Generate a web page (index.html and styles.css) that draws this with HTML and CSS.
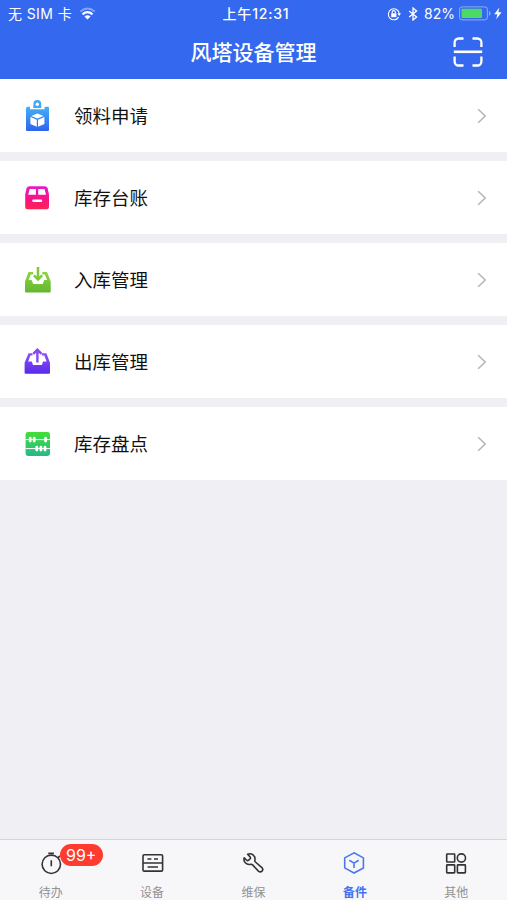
FILE: index.html
```
<!DOCTYPE html>
<html lang="zh-CN">
<head>
  <meta charset="UTF-8">
  <title>风塔设备管理</title>
  <meta name="viewport" content="width=device-width, initial-scale=1.0">
  <link rel="stylesheet" href="styles.css">
</head>
<body>

  <header class="header">
    <div class="status">
      <div class="status-left">
        <span class="carrier">无 SIM 卡</span>
        <svg width="17" height="13" viewBox="0 0 17 13" fill="none" stroke="#fff">
          <path d="M1.2 4.6Q8.5 -1.6 15.8 4.6" stroke-width="1.8" opacity=".4"/>
          <path d="M3.5 7.3Q8.5 3.1 13.5 7.3" stroke-width="2.2"/>
          <path d="M5.5 9.5Q8.5 7.1 11.5 9.5L8.5 12.4Z" fill="#fff" stroke="none"/>
        </svg>
      </div>
      <div class="time">上午12:31</div>
      <div class="status-right">
        <svg class="lock" width="14" height="14" viewBox="0 0 14 14" fill="none" stroke="#fff" stroke-width="1.1">
          <path d="M11.6 10.1A5.5 5.5 0 1 1 12.3 6.5"/>
          <path d="M10.3 6.3H14L12.2 8.9Z" fill="#fff" stroke="none"/>
          <rect x="4.2" y="6.3" width="5.2" height="3.9" fill="#fff" stroke="none"/>
          <path d="M5.2 6.5V5.2a1.6 1.6 0 0 1 3.2 0V6.5"/>
        </svg>
        <svg class="bluetooth" width="10" height="14" viewBox="0 0 10 14" fill="none" stroke="#fff" stroke-width="1.3">
          <path d="M1.2 4L8.6 10 5 13V1L8.6 4 1.2 10"/>
        </svg>
        <span class="percent">82%</span>
        <svg class="battery" width="32" height="15" viewBox="0 0 32 15">
          <rect x=".6" y=".9" width="27.8" height="13" rx="2.5" fill="none" stroke="#fff" opacity=".45"/>
          <rect x="2.5" y="2.8" width="20.5" height="9.2" rx=".8" fill="#4cd964"/>
          <path d="M30 5v4.8Q31.6 9 31.6 7.4T30 5" fill="#fff" opacity=".45"/>
        </svg>
        <svg width="8" height="13" viewBox="0 0 8 13" fill="#fff">
          <path d="M5.4 .6L.2 7.3H3.4L2.2 12.3 7.6 5.3H4.3Z"/>
        </svg>
      </div>
    </div>
    <div class="navbar">
      <h1>风塔设备管理</h1>
      <svg class="scan" width="30" height="30" viewBox="0 0 30 30" fill="none" stroke="#fff" stroke-width="2.3">
        <path d="M1.6 10V5.5A4 4 0 0 1 5.6 1.5H10.5M19.5 1.5H24.4A4 4 0 0 1 28.4 5.5V10M1.6 19.5V24.5A4 4 0 0 0 5.6 28.5H10.5M19.5 28.5H24.4A4 4 0 0 0 28.4 24.5V19.5"/>
        <path d="M.8 14.8H29.2" stroke-width="2.6"/>
      </svg>
    </div>
  </header>

  <main class="menu">
    <div class="row">
      <svg class="icon" viewBox="0 0 30 36">
        <defs><linearGradient id="blue" x2="0" y2="1"><stop stop-color="#43b1f5"/><stop offset="1" stop-color="#2e62f0"/></linearGradient></defs>
        <path d="M4.6 8.7H25a1 1 0 0 1 1 1V32a1 1 0 0 1-1 1H4a1 1 0 0 1-1-1V9.7Z" fill="url(#blue)"/>
        <path d="M7 8V11.2H21.6V8H18.2V9.7H10.4V8Z" fill="#fff"/>
        <path d="M10.4 10V5.9a3.9 3.9 0 0 1 7.8 0V10Z" fill="#40a8f4"/>
        <circle cx="14.3" cy="6.2" r="1.7" fill="#fff"/>
        <g fill="#fff">
          <path d="M14.4 15.6L20.5 18 14.4 20.6 8.2 18Z"/>
          <path d="M7.4 19.1L13.8 21.8V28.8L7.4 26ZM21.4 19.1L15 21.8V28.8L21.4 26Z"/>
        </g>
      </svg>
      <span class="label">领料申请</span>
      <svg class="arrow" viewBox="0 0 10 16"><path d="M1.2 1.3L8.2 8 1.2 14.7"/></svg>
    </div>
    <div class="row">
      <svg class="icon" viewBox="0 0 30 36">
        <defs><linearGradient id="pink" x2="0" y2="1"><stop stop-color="#e51ad0"/><stop offset=".6" stop-color="#f91480"/><stop offset="1" stop-color="#fc2550"/></linearGradient></defs>
        <path d="M6.5 6.2H21.7Q24 6.2 24.6 8.2L26 14.5V27Q26 29.2 23.8 29.2H4.4Q2.2 29.2 2.2 27V14.5L3.6 8.2Q4.2 6.2 6.5 6.2Z" fill="url(#pink)"/>
        <path d="M6.7 9H12.9V14.7H5.2ZM15.2 9H21.5L23 14.7H15.2Z" fill="#fff"/>
        <path d="M10.4 20.7H18" stroke="#fff" stroke-width="2.4" stroke-linecap="round"/>
      </svg>
      <span class="label">库存台账</span>
      <svg class="arrow" viewBox="0 0 10 16"><path d="M1.2 1.3L8.2 8 1.2 14.7"/></svg>
    </div>
    <div class="row">
      <svg class="icon" viewBox="0 0 30 36">
        <defs><linearGradient id="green" x2="0" y2="1"><stop stop-color="#8fd344"/><stop offset="1" stop-color="#62b72e"/></linearGradient></defs>
        <path d="M5.5 10H10V12.4H7.8L5.6 18H8.6L10.2 22H19.8L21.2 18H24.2L21.8 12.4H19.3V10H24L27.7 19.5V29.4a1 1 0 0 1-1 1H3a1 1 0 0 1-1-1V19.5Z" fill="url(#green)"/>
        <path d="M15 5V17.2M10.9 13.3L15 17.5 19.1 13.3" fill="none" stroke="#7cc93b" stroke-width="2.5"/>
      </svg>
      <span class="label">入库管理</span>
      <svg class="arrow" viewBox="0 0 10 16"><path d="M1.2 1.3L8.2 8 1.2 14.7"/></svg>
    </div>
    <div class="row">
      <svg class="icon" viewBox="0 0 30 36">
        <defs><linearGradient id="purple" x2="0" y2="1"><stop stop-color="#9450f8"/><stop offset="1" stop-color="#562ae8"/></linearGradient></defs>
        <path d="M5.5 9.2H9.5V11.4H7.4L5.2 17.6H8.8L10 21H18.9L20 17.6H23.6L21.3 11.4H19V9.2H23.4L27 18.8V28.8a1 1 0 0 1-1 1H2.6a1 1 0 0 1-1-1V18.8Z" fill="url(#purple)"/>
        <path d="M14.4 18.5V6.5M10.3 9.9L14.4 5.7 18.5 9.9" fill="none" stroke="#8548f5" stroke-width="2.4"/>
      </svg>
      <span class="label">出库管理</span>
      <svg class="arrow" viewBox="0 0 10 16"><path d="M1.2 1.3L8.2 8 1.2 14.7"/></svg>
    </div>
    <div class="row">
      <svg class="icon" viewBox="0 0 30 36">
        <defs><linearGradient id="teal" x2="0" y2="1"><stop stop-color="#43df34"/><stop offset="1" stop-color="#27b88b"/></linearGradient></defs>
        <rect x="2.6" y="6" width="24.4" height="24" rx="2.4" fill="url(#teal)"/>
        <path d="M2.6 13.6H27M2.6 22.6H27" stroke="#fff" stroke-width="1"/>
        <path d="M7.2 12.2V15M11.2 12.2V15M22.6 12.2V15M13.8 21.2V24M17.9 21.2V24M22 21.2V24" stroke="#fff" stroke-width="2.8" stroke-linecap="round"/>
      </svg>
      <span class="label">库存盘点</span>
      <svg class="arrow" viewBox="0 0 10 16"><path d="M1.2 1.3L8.2 8 1.2 14.7"/></svg>
    </div>
  </main>

  <nav class="tabbar">
    <div class="tab">
      <div class="tab-icon">
        <svg viewBox="0 0 24 24">
          <circle cx="12.3" cy="13.3" r="9.2"/>
          <path d="M9.3 2.4H14.9M12.3 9.2V15.3M18.9 6.8L21 4.8"/>
        </svg>
        <span class="badge">99+</span>
      </div>
      <span>待办</span>
    </div>
    <div class="tab">
      <div class="tab-icon">
        <svg viewBox="0 0 24 24">
          <rect x="3" y="3.7" width="19.6" height="16.4" rx="1.2"/>
          <path d="M3 12H22.6M7.4 8H11.4M14 8H18M7.6 16H18"/>
        </svg>
      </div>
      <span>设备</span>
    </div>
    <div class="tab">
      <div class="tab-icon">
        <svg viewBox="0 0 24 24">
          <path d="M5.6 3.3C9.6 1.6 13.6 4.7 12.9 8.6Q12.6 10.2 13.4 11L19.9 16.6C22.2 18.9 19 22.4 16.4 20.1L10.6 13.9Q9.8 13.1 8.3 13.4C4.2 14 1 10.7 2.2 6.8L4.6 9.2Q5.6 10 6.6 9.2L8.1 7.8Q8.9 6.9 8.1 5.9Z" stroke-linejoin="round"/>
        </svg>
      </div>
      <span>维保</span>
    </div>
    <div class="tab active">
      <div class="tab-icon">
        <svg viewBox="0 0 24 24">
          <path d="M11 1.8L20.4 6.9V16.9L11 22 1.7 16.9V6.9ZM6.3 9.2L11 12.1 15.7 9.2M11 12.1V17"/>
        </svg>
      </div>
      <span>备件</span>
    </div>
    <div class="tab">
      <div class="tab-icon">
        <svg viewBox="0 0 24 24">
          <rect x="2.7" y="3" width="8" height="8" rx=".6"/>
          <circle cx="17.4" cy="7" r="4.1"/>
          <rect x="2.7" y="13.9" width="8" height="8" rx=".6"/>
          <rect x="13.4" y="13.9" width="8" height="8" rx=".6"/>
        </svg>
      </div>
      <span>其他</span>
    </div>
  </nav>

</body>
</html>
```

FILE: styles.css
```
* {
  box-sizing: border-box;
}
body {
  margin: 0;
  height: 900px;
  display: flex;
  flex-direction: column;
  overflow: hidden;
  background: #efeff4;
  color: #111;
  font-family: Inter, "Noto Sans CJK SC", sans-serif;
}
svg {
  display: block;
  flex: none;
}
.header {
  height: 79px;
  background: #3468ef;
  color: #fff;
}
.status {
  display: grid;
  grid-template-columns: 1fr auto 1fr;
  align-items: center;
  height: 27px;
  padding: 0 5px 0 8px;
  font-size: 14px;
  line-height: 20px;
}
.status-left, .status-right {
  display: flex;
  align-items: center;
}
.status-left {
  gap: 7px;
}
.carrier {
  letter-spacing: 0.4px;
}
.status-right {
  justify-content: flex-end;
}
.time {
  padding-left: 2px;
  font-weight: 500;
  letter-spacing: 0.8px;
}
.lock {
  margin-right: 7px;
}
.bluetooth {
  margin-right: 6px;
}
.battery {
  margin: 0 3px 0 4px;
}
.navbar {
  display: grid;
  grid-template-columns: 1fr auto 1fr;
  align-items: center;
  height: 50px;
  padding: 0 24px;
}
h1 {
  grid-column: 2;
  margin: 0;
  padding-top: 2px;
  font-size: 21px;
  font-weight: 500;
  line-height: 30px;
}
.scan {
  justify-self: end;
}
.menu {
  flex: 1;
  display: flex;
  flex-direction: column;
  gap: 8.5px;
}
.row {
  display: flex;
  align-items: center;
  height: 73.4px;
  padding: 1px 20px 0 23px;
  background: #fff;
}
.icon {
  width: 30px;
  height: 36px;
}
.label {
  flex: 1;
  margin-left: 21px;
  font-size: 18.5px;
  line-height: 28px;
}
.arrow {
  width: 10px;
  height: 16px;
  fill: none;
  stroke: #b4b4b8;
  stroke-width: 1.5;
}
.tabbar {
  display: flex;
  height: 61px;
  padding-top: 11px;
  border-top: 1px solid #d5d5d9;
  background: #f7f7fa;
}
.tab {
  flex: 1;
  display: flex;
  flex-direction: column;
  align-items: center;
  gap: 9px;
  color: #929292;
  font-size: 12px;
  line-height: 18px;
}
.tab-icon {
  position: relative;
}
.tab svg {
  width: 24px;
  height: 24px;
  fill: none;
  stroke: #333;
  stroke-width: 1.6;
}
.tab.active {
  color: #4672ee;
  font-weight: 700;
}
.tab.active svg {
  stroke: #4c78ee;
}
.badge {
  position: absolute;
  left: 21px;
  top: -7px;
  width: 43px;
  height: 22px;
  border-radius: 11px;
  background: #ff3b30;
  color: #fff;
  font-size: 16px;
  line-height: 22px;
  text-align: center;
}
```
